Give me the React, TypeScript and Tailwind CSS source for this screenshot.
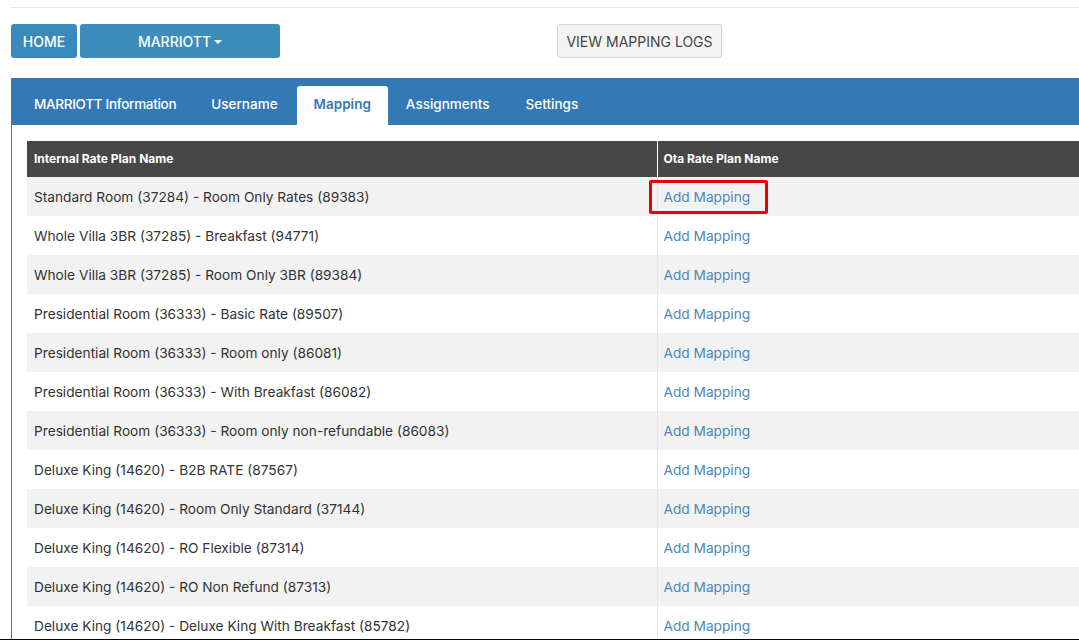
import React from 'react'

type RatePlan = {
  name: string
}

const ratePlans: RatePlan[] = [
  { name: 'Standard Room (37284) - Room Only Rates (89383)' },
  { name: 'Whole Villa 3BR (37285) - Breakfast (94771)' },
  { name: 'Whole Villa 3BR (37285) - Room Only 3BR (89384)' },
  { name: 'Presidential Room (36333) - Basic Rate (89507)' },
  { name: 'Presidential Room (36333) - Room only (86081)' },
  { name: 'Presidential Room (36333) - With Breakfast (86082)' },
  { name: 'Presidential Room (36333) - Room only non-refundable (86083)' },
  { name: 'Deluxe King (14620) - B2B RATE (87567)' },
  { name: 'Deluxe King (14620) - Room Only Standard (37144)' },
  { name: 'Deluxe King (14620) - RO Flexible (87314)' },
  { name: 'Deluxe King (14620) - RO Non Refund (87313)' },
  { name: 'Deluxe King (14620) - Deluxe King With Breakfast (85782)' },
]

const tabs = ['MARRIOTT Information', 'Username', 'Mapping', 'Assignments', 'Settings']

const App = () => {
  return (
    <div
      className="h-[640px] overflow-hidden border-b border-black bg-white text-[#333]"
      style={{ fontFamily: 'Inter, "Noto Sans", sans-serif' }}
    >
      <div className="pl-[10px] pt-[7px]">
        <div className="border-t border-[#e8e8e8]" />

        {/* top buttons */}
        <div className="flex items-center pl-px pt-4">
          <button className="h-[34px] w-[66px] rounded-[3px] bg-[#3a8bbd] text-[14px] font-medium text-white">
            HOME
          </button>
          <button className="ml-[3px] flex h-[34px] w-[200px] items-center justify-center rounded-[3px] bg-[#3c8dbc] text-[14px] font-medium text-white">
            MARRIOTT
            <span className="ml-[3px] mt-px border-x-[4px] border-t-[4px] border-x-transparent border-t-white" />
          </button>
          <button className="ml-[277px] h-[34px] w-[165px] rounded-[3px] border border-[#d6d6d6] bg-[#f4f4f4] text-[14px] text-[#444]">
            VIEW MAPPING LOGS
          </button>
        </div>

        {/* tab panel */}
        <div className="ml-px mt-5 border-l border-[#3379b5]">
          <div className="flex h-[47px] items-end bg-[#3379b5] pl-[5px]">
            {tabs.map((tab, index) =>
              tab === 'Mapping' ? (
                <div
                  key={tab}
                  className="ml-px flex h-[39px] items-center rounded-t-[3px] bg-white px-[17px] pb-[3px] text-[13.5px] font-semibold text-[#3379b5]"
                >
                  {tab}
                </div>
              ) : (
                <div
                  key={tab}
                  className={
                    index === 0
                      ? 'flex h-[39px] items-center px-[17px] pb-[3px] text-[13.5px] font-medium tracking-[-0.3px] text-white'
                      : 'flex h-[39px] items-center px-[18px] pb-[3px] text-[13.5px] font-medium text-white'
                  }
                >
                  {tab}
                </div>
              ),
            )}
          </div>

          <div className="pl-[15px] pt-4">
            <table className="w-full border-collapse text-left text-[13.7px]">
              <thead>
                <tr className="h-9 bg-[#474747] text-[12px] font-bold text-white">
                  <th className="w-[630px] px-[7px]">Internal Rate Plan Name</th>
                  <th className="border-l border-white px-[6px]">Ota Rate Plan Name</th>
                </tr>
              </thead>
              <tbody>
                {ratePlans.map((plan, index) => (
                  <tr key={plan.name} className={index % 2 === 0 ? 'h-[39px] bg-[#f2f2f2]' : 'h-[39px] bg-white'}>
                    <td className="px-[7px] pt-px">{plan.name}</td>
                    <td className="border-l border-[#e6e6e6] px-[6px] pt-px">
                      {index === 0 ? (
                        <span className="-mx-[15px] inline-block rounded-[2px] border-[3px] border-[#ee0000] py-[4px] pl-3 pr-[15px] text-[#4a88ba]">
                          Add Mapping
                        </span>
                      ) : (
                        <span className="text-[#4a88ba]">Add Mapping</span>
                      )}
                    </td>
                  </tr>
                ))}
              </tbody>
            </table>
          </div>
        </div>
      </div>
    </div>
  )
}

export default App
